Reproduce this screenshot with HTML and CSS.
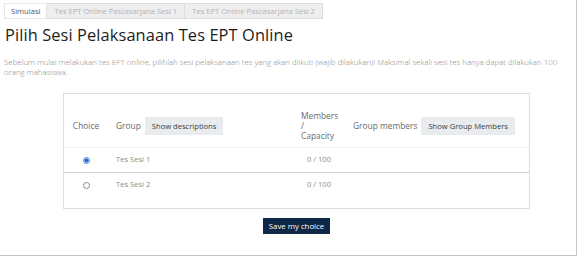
FILE: index.html
```html
<!DOCTYPE html>
<html lang="id">
<head>
<meta charset="utf-8">
<title>Pilih Sesi Pelaksanaan Tes EPT Online</title>
<link rel="stylesheet" href="styles.css">
</head>
<body>
<div class="frame">
  <nav class="tabs">
    <span class="tab active">Simulasi</span>
    <span class="tab">Tes EPT Online Pascasarjana Sesi 1</span>
    <span class="tab">Tes EPT Online Pascasarjana Sesi 2</span>
  </nav>
  <h1 class="title">Pilih Sesi Pelaksanaan Tes EPT Online</h1>
  <p class="intro">Sebelum mulai melakukan tes EPT online, pilihlah sesi pelaksanaan tes yang akan diikuti (wajib dilakukan)! Maksimal sekali sesi tes hanya dapat dilakukan 100 orang mahasiswa.</p>
  <section class="choice-area">
    <div class="table-box">
      <table class="groups">
        <colgroup>
          <col class="c-choice">
          <col class="c-group">
          <col class="c-members">
          <col class="c-gm">
        </colgroup>
        <thead>
          <tr>
            <th class="th-choice">Choice</th>
            <th><span class="hlabel">Group</span><span class="btn-light">Show descriptions</span></th>
            <th class="th-members">Members<br>/<br>Capacity</th>
            <th><span class="hlabel">Group members</span><span class="btn-light">Show Group Members</span></th>
          </tr>
        </thead>
        <tbody>
          <tr class="row first">
            <td class="td-radio"><span class="radio checked"></span></td>
            <td>Tes Sesi 1</td>
            <td class="td-count">0 / 100</td>
            <td></td>
          </tr>
          <tr class="row">
            <td class="td-radio"><span class="radio"></span></td>
            <td>Tes Sesi 2</td>
            <td class="td-count">0 / 100</td>
            <td></td>
          </tr>
        </tbody>
      </table>
    </div>
    <button class="btn-save" type="button">Save my choice</button>
  </section>
</div>
</body>
</html>
```
FILE: styles.css
```css
html, body {
  margin: 0;
  padding: 0;
  background: #fff;
}
body {
  font-family: "Open Sans", "Liberation Sans", sans-serif;
  color: #555;
}
.frame {
  width: 577px;
  height: 256px;
  box-sizing: border-box;
  border-right: 1px solid #c4c4c4;
  border-bottom: 1px solid #c4c4c4;
  padding: 3px 0 0 4px;
  overflow: hidden;
}
.tabs {
  display: flex;
  height: 16px;
}
.tab {
  display: flex;
  align-items: center;
  height: 16px;
  box-sizing: border-box;
  padding: 0 7px;
  font-size: 7.6px;
  color: #b3b3b3;
  background: #eeeeee;
  border: 1px solid #dcdcdc;
  border-left: none;
}
.tab.active {
  color: #555;
  background: #fff;
  border-left: 1px solid #e6e6e6;
  border-color: #e6e6e6;
  padding: 0 6px;
}
.title {
  margin: 6px 0 0 1px;
  font-size: 16.4px;
  font-weight: 500;
  line-height: 20px;
  color: #1d1d1d;
  letter-spacing: 0.1px;
}
.intro {
  margin: 12px 0 0 0;
  width: 568px;
  font-size: 7.9px;
  line-height: 10px;
  color: #8a8a8a;
  font-weight: 300;
}
.choice-area {
  margin: 16px 0 0 59px;
  width: 467px;
  display: flex;
  flex-direction: column;
  align-items: center;
}
.table-box {
  width: 467px;
  box-sizing: border-box;
  border: 1px solid #dedede;
  padding: 11px 0 10px 0;
}
.groups {
  width: 465px;
  border-collapse: collapse;
  table-layout: fixed;
}
.c-choice { width: 44px; }
.c-group { width: 185px; }
.c-members { width: 52px; }
.c-gm { width: 184px; }
.groups th {
  font-size: 8.4px;
  font-weight: 400;
  color: #6a6a6a;
  line-height: 10px;
  text-align: left;
  vertical-align: middle;
  padding: 6px 0 6px 8px;
  border-bottom: 1px solid #f0f0f0;
  white-space: nowrap;
}
.groups th.th-choice {
  text-align: center;
  padding-left: 0;
}
.hlabel {
  display: inline-block;
  vertical-align: middle;
  margin-right: 4px;
}
.btn-light {
  display: inline-flex;
  align-items: center;
  vertical-align: middle;
  height: 18px;
  padding: 0 7px;
  background: #e9ecef;
  color: #3a3a3a;
  font-size: 7.6px;
}
.groups td {
  font-size: 7.6px;
  color: #8c8c8c;
  height: 25px;
  box-sizing: border-box;
  padding: 0 0 2px 8px;
  vertical-align: middle;
}
.groups tr.first td {
  border-bottom: 1px solid #d2d2d2;
}
.groups td.td-radio {
  padding-left: 0;
  text-align: center;
}
.groups td.td-count {
  padding-left: 0;
  padding-right: 0;
  text-align: center;
}
.radio {
  display: inline-block;
  width: 7px;
  height: 7px;
  box-sizing: border-box;
  border-radius: 50%;
  border: 1px solid #8a8a8a;
  background: #fff;
  vertical-align: middle;
  margin-top: 2px;
}
.radio.checked {
  border: 1px solid #5b8fdc;
  background: radial-gradient(circle, #1e6fd9 0 1.8px, #d6e4f8 2.3px);
}
.btn-save {
  margin-top: 9px;
  height: 16px;
  padding: 0 6px;
  border: none;
  background: #0e2847;
  color: #fff;
  font-family: "Open Sans", "Liberation Sans", sans-serif;
  font-size: 7.8px;
  line-height: 16px;
}
```
